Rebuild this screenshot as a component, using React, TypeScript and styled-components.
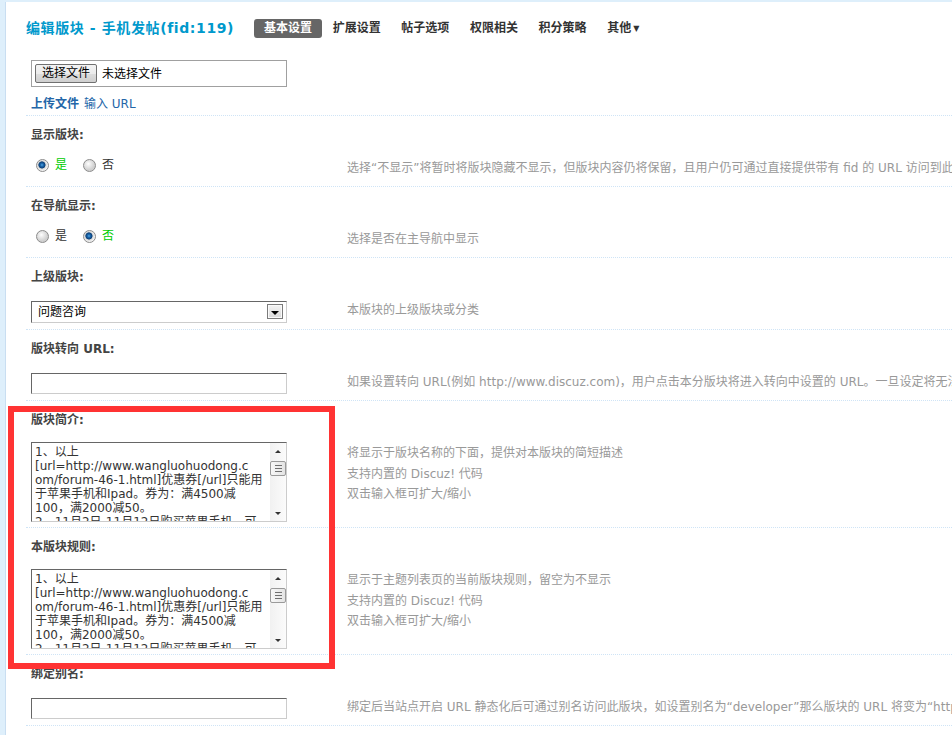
import React from "react";
import styled, { createGlobalStyle } from "styled-components";

const FONT = `"DejaVu Sans", "Noto Sans CJK SC", sans-serif`;

const GlobalStyle = createGlobalStyle`
  html, body { margin: 0; padding: 0; background: #fff; }
  body { font: 12px/1.5 ${FONT}; color: #333; overflow: hidden; }
`;

const Page = styled.div`
  height: 735px;
  box-sizing: border-box;
  border-top: 2px solid #deeffb;
  border-left: 5px solid #deeffb;
  box-shadow: inset 1px 0 0 #c9def1;
  padding-left: 21px;
  overflow: hidden;
`;

const Header = styled.div`
  display: flex;
  align-items: center;
  height: 52px;
`;

const Title = styled.h3`
  margin: 0 20px 0 0;
  font-size: 14px;
  font-weight: bold;
  letter-spacing: 0.6px;
  color: #09c;
  white-space: nowrap;
`;

const Tabs = styled.ul`
  display: flex;
  list-style: none;
  margin: 0;
  padding: 0;
`;

const Tab = styled.li<{ $active?: boolean }>`
  height: 19px;
  line-height: 19px;
  padding: 0 10px;
  margin-right: 0.6px;
  border-radius: 3px;
  font-weight: bold;
  white-space: nowrap;
  color: ${(p) => (p.$active ? "#fff" : "#333")};
  background: ${(p) => (p.$active ? "#666" : "transparent")};
`;

const Caret = styled.span`
  font-size: 8px;
  margin-left: 2px;
  vertical-align: 1px;
`;

const FileRow = styled.div`
  padding: 6px 5px 2px;
  border-bottom: 1px dotted #cfe4f6;
`;

const FileBox = styled.div`
  display: flex;
  align-items: center;
  gap: 5px;
  width: 256px;
  height: 27px;
  box-sizing: border-box;
  border: 1px solid #a0a0a0;
  padding-left: 3px;
  color: #000;
`;

const FileButton = styled.button`
  width: 62px;
  height: 19px;
  padding: 0;
  border: 1px solid #707070;
  border-radius: 2px;
  background: linear-gradient(#f3f3f3, #ebebeb 50%, #dddddd 50%, #cfcfcf);
  font: 12px/17px ${FONT};
  color: #000;
`;

const Links = styled.div`
  margin-top: 8px;
  line-height: 18px;
  display: flex;
  gap: 5px;
`;

const Link = styled.a<{ $strong?: boolean }>`
  color: #2366a8;
  text-decoration: none;
  font-weight: ${(p) => (p.$strong ? "bold" : "normal")};
`;

const LabelRow = styled.div`
  height: 38px;
  line-height: 38px;
  padding: 0 5px;
  font-weight: bold;
  color: #444;
  white-space: nowrap;
`;

const ValueRow = styled.div`
  display: grid;
  grid-template-columns: 316px minmax(0, 1fr);
  border-bottom: 1px dotted #cfe4f6;
`;

const ValueCell = styled.div<{ $tight?: boolean }>`
  padding: ${(p) => (p.$tight ? "3px 5px 5px" : "5px 5px 6px")};
`;

const HintCell = styled.div<{ $multi?: boolean }>`
  padding: 4px 5px 0;
  line-height: ${(p) => (p.$multi ? "20.5px" : "20px")};
  color: #999;
  white-space: nowrap;
  overflow: hidden;
`;

const RadioGroup = styled.div`
  display: flex;
  align-items: flex-start;
  height: 21px;
`;

const RadioOption = styled.label`
  display: flex;
  align-items: center;
  gap: 6px;
  height: 13px;
  margin: 0 11px 0 5px;
`;

const RadioDot = styled.span<{ $checked?: boolean }>`
  width: 13px;
  height: 13px;
  box-sizing: border-box;
  border-radius: 50%;
  border: 1px solid #8c8c8c;
  background: ${(p) =>
    p.$checked
      ? "radial-gradient(circle at 45% 45%, #4fa6e6 0, #1a64a8 1.6px, #0b3f77 3.2px, #d9d9d9 3.9px, #f6f6f6 6px)"
      : "radial-gradient(circle at 40% 35%, #ffffff 0, #eeeeee 2px, #d0d0d0 6px)"};
`;

const RadioText = styled.span<{ $checked?: boolean }>`
  color: ${(p) => (p.$checked ? "#00cc00" : "#333")};
  line-height: 13px;
`;

const TextInput = styled.input`
  display: block;
  box-sizing: border-box;
  width: 256px;
  height: 21px;
  margin: 0;
  border: 1px solid;
  border-color: #666 #ccc #ccc #666;
  padding: 0 4px;
  font: 12px ${FONT};
  background: #fff;
`;

const SelectWrap = styled.div`
  position: relative;
  width: 256px;
  height: 22px;
`;

const Select = styled.select`
  appearance: none;
  display: block;
  width: 100%;
  height: 100%;
  margin: 0;
  border: 1px solid;
  border-color: #666 #ccc #ccc #666;
  border-radius: 0;
  background: #fff;
  padding: 0 0 0 6px;
  font: 12px ${FONT};
  color: #000;
`;

const SelectArrow = styled.span`
  position: absolute;
  right: 4px;
  top: 3px;
  width: 16px;
  height: 15px;
  box-sizing: border-box;
  border: 1px solid #7b7b7b;
  box-shadow: inset 0 0 0 1px #fafafa;
  background: linear-gradient(#f4f4f4, #d9d9d9);
  display: flex;
  align-items: center;
  justify-content: center;
  pointer-events: none;
  &::after {
    content: "";
    border-left: 4px solid transparent;
    border-right: 4px solid transparent;
    border-top: 4px solid #000;
    margin-top: 2px;
  }
`;

const TextareaBox = styled.div`
  display: flex;
  width: 256px;
  height: 80px;
  box-sizing: border-box;
  border: 1px solid;
  border-color: #666 #ccc #ccc #666;
  background: #fff;
`;

const TextArea = styled.textarea`
  flex: 1;
  min-width: 0;
  margin: 0;
  border: 0;
  padding: 2px 3px;
  resize: none;
  overflow: hidden;
  outline: none;
  white-space: pre;
  font: 12px/14px ${FONT};
  color: #333;
  background: #fff;
`;

const ScrollBar = styled.div`
  flex: none;
  width: 16px;
  display: flex;
  flex-direction: column;
  background: linear-gradient(90deg, #f1f1f1, #fbfbfb);
`;

const ScrollButton = styled.div<{ $down?: boolean }>`
  height: 16px;
  display: flex;
  align-items: center;
  justify-content: center;
  margin-top: ${(p) => (p.$down ? "auto" : "0")};
  &::after {
    content: "";
    border-left: 3px solid transparent;
    border-right: 3px solid transparent;
    ${(p) => (p.$down ? "border-top: 3px solid #333;" : "border-bottom: 3px solid #333;")}
  }
`;

const ScrollThumb = styled.div`
  height: 15px;
  margin: 2px 0 0;
  box-sizing: border-box;
  border: 1px solid #9a9a9a;
  border-radius: 2px;
  background: linear-gradient(90deg, #f7f7f7, #e4e4e4);
  display: flex;
  flex-direction: column;
  align-items: center;
  justify-content: center;
  gap: 2px;
`;

const Grip = styled.span`
  width: 7px;
  height: 1px;
  background: #6f6f6f;
`;

const HighlightGroup = styled.div`
  position: relative;
  &::after {
    content: "";
    position: absolute;
    left: -18px;
    top: 5px;
    width: 327px;
    height: 263px;
    box-sizing: border-box;
    border: 6px solid #ff3333;
    pointer-events: none;
  }
`;

type Hint = string | string[];

const HintBlock = ({ hint }: { hint: Hint }) =>
  Array.isArray(hint) ? (
    <HintCell $multi>
      {hint.map((h) => (
        <div key={h}>{h}</div>
      ))}
    </HintCell>
  ) : (
    <HintCell>{hint}</HintCell>
  );

const Setting = ({
  label,
  hint,
  tight,
  children,
}: {
  label: string;
  hint: Hint;
  tight?: boolean;
  children: React.ReactNode;
}) => (
  <>
    <LabelRow>{label}</LabelRow>
    <ValueRow>
      <ValueCell $tight={tight}>{children}</ValueCell>
      <HintBlock hint={hint} />
    </ValueRow>
  </>
);

const YesNo = ({ yes }: { yes: boolean }) => (
  <RadioGroup>
    <RadioOption>
      <RadioDot $checked={yes} />
      <RadioText $checked={yes}>是</RadioText>
    </RadioOption>
    <RadioOption>
      <RadioDot $checked={!yes} />
      <RadioText $checked={!yes}>否</RadioText>
    </RadioOption>
  </RadioGroup>
);

const RULES_TEXT = [
  "1、以上",
  "[url=http://www.wangluohuodong.c",
  "om/forum-46-1.html]优惠券[/url]只能用",
  "于苹果手机和Ipad。券为：满4500减",
  "100，满2000减50。",
  "2、11月2日-11月12日购买苹果手机，可",
].join("\n");

const FakeTextarea = ({ value }: { value: string }) => (
  <TextareaBox>
    <TextArea wrap="off" defaultValue={value} />
    <ScrollBar>
      <ScrollButton />
      <ScrollThumb>
        <Grip />
        <Grip />
        <Grip />
      </ScrollThumb>
      <ScrollButton $down />
    </ScrollBar>
  </TextareaBox>
);

const tabs = ["基本设置", "扩展设置", "帖子选项", "权限相关", "积分策略"];

export default function App() {
  return (
    <>
      <GlobalStyle />
      <Page>
        <Header>
          <Title>编辑版块 - 手机发帖(fid:119)</Title>
          <Tabs>
            {tabs.map((t, i) => (
              <Tab key={t} $active={i === 0}>
                {t}
              </Tab>
            ))}
            <Tab>
              其他<Caret>▼</Caret>
            </Tab>
          </Tabs>
        </Header>

        <FileRow>
          <FileBox>
            <FileButton type="button">选择文件</FileButton>
            <span>未选择文件</span>
          </FileBox>
          <Links>
            <Link $strong>上传文件</Link>
            <Link>输入 URL</Link>
          </Links>
        </FileRow>

        <Setting
          label="显示版块:"
          hint="选择“不显示”将暂时将版块隐藏不显示，但版块内容仍将保留，且用户仍可通过直接提供带有 fid 的 URL 访问到此版块"
        >
          <YesNo yes />
        </Setting>

        <Setting label="在导航显示:" hint="选择是否在主导航中显示">
          <YesNo yes={false} />
        </Setting>

        <Setting label="上级版块:" hint="本版块的上级版块或分类">
          <SelectWrap>
            <Select defaultValue="问题咨询">
              <option>问题咨询</option>
            </Select>
            <SelectArrow />
          </SelectWrap>
        </Setting>

        <Setting
          label="版块转向 URL:"
          hint="如果设置转向 URL(例如 http://www.discuz.com)，用户点击本分版块将进入转向中设置的 URL。一旦设定将无法进入版块页面，请确认是否需要使用此功能，留空为不设置转向"
        >
          <TextInput />
        </Setting>

        <HighlightGroup>
          <Setting
            label="版块简介:"
            tight
            hint={["将显示于版块名称的下面，提供对本版块的简短描述", "支持内置的 Discuz! 代码", "双击输入框可扩大/缩小"]}
          >
            <FakeTextarea value={RULES_TEXT} />
          </Setting>

          <Setting
            label="本版块规则:"
            tight
            hint={["显示于主题列表页的当前版块规则，留空为不显示", "支持内置的 Discuz! 代码", "双击输入框可扩大/缩小"]}
          >
            <FakeTextarea value={RULES_TEXT} />
          </Setting>
        </HighlightGroup>

        <Setting
          label="绑定别名:"
          hint="绑定后当站点开启 URL 静态化后可通过别名访问此版块，如设置别名为“developer”那么版块的 URL 将变为“http://www.discuz.net/forum-developer-1.html”"
        >
          <TextInput />
        </Setting>
      </Page>
    </>
  );
}
